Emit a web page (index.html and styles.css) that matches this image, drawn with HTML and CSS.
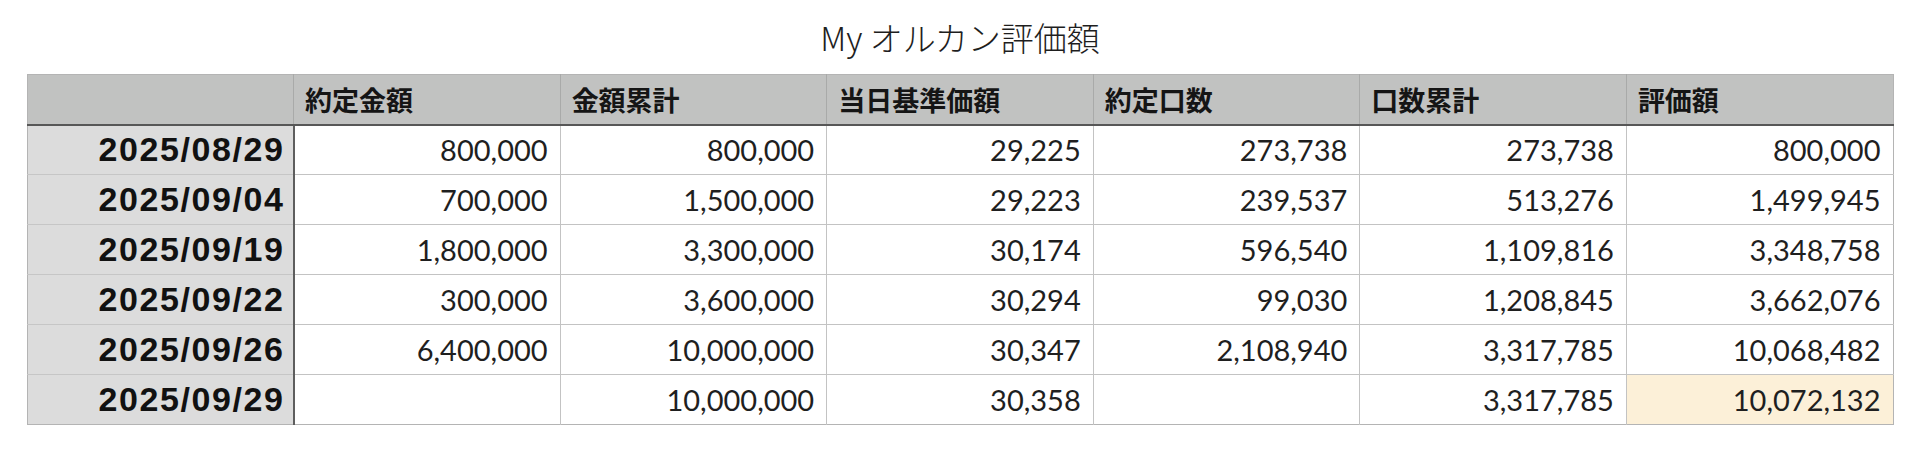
FILE: index.html
```html
<!DOCTYPE html>
<html lang="ja">
<head>
<meta charset="utf-8">
<title>My オルカン評価額</title>
<link rel="stylesheet" href="styles.css">
</head>
<body>
<div class="page">
  <h1 class="title">My オルカン評価額</h1>
  <table class="sheet">
    <thead>
      <tr>
        <th class="corner"></th>
        <th>約定金額</th>
        <th>金額累計</th>
        <th>当日基準価額</th>
        <th>約定口数</th>
        <th>口数累計</th>
        <th>評価額</th>
      </tr>
    </thead>
    <tbody>
      <tr>
        <th class="date">2025/08/29</th>
        <td>800,000</td><td>800,000</td><td>29,225</td><td>273,738</td><td>273,738</td><td>800,000</td>
      </tr>
      <tr>
        <th class="date">2025/09/04</th>
        <td>700,000</td><td>1,500,000</td><td>29,223</td><td>239,537</td><td>513,276</td><td>1,499,945</td>
      </tr>
      <tr>
        <th class="date">2025/09/19</th>
        <td>1,800,000</td><td>3,300,000</td><td>30,174</td><td>596,540</td><td>1,109,816</td><td>3,348,758</td>
      </tr>
      <tr>
        <th class="date">2025/09/22</th>
        <td>300,000</td><td>3,600,000</td><td>30,294</td><td>99,030</td><td>1,208,845</td><td>3,662,076</td>
      </tr>
      <tr>
        <th class="date">2025/09/26</th>
        <td>6,400,000</td><td>10,000,000</td><td>30,347</td><td>2,108,940</td><td>3,317,785</td><td>10,068,482</td>
      </tr>
      <tr>
        <th class="date">2025/09/29</th>
        <td></td><td>10,000,000</td><td>30,358</td><td></td><td>3,317,785</td><td class="highlight">10,072,132</td>
      </tr>
    </tbody>
  </table>
</div>
</body>
</html>
```
FILE: styles.css
```css
html, body {
  margin: 0;
  padding: 0;
  background: #ffffff;
}

.page {
  width: 1867px;
  margin: 0 auto;
  padding-top: 17px;
}

.title {
  margin: 0;
  height: 57px;
  line-height: 40px;
  text-align: center;
  font-family: "Noto Sans CJK JP", "Noto Sans", sans-serif;
  font-weight: 300;
  font-size: 33px;
  color: #1e1e1e;
}

.sheet {
  width: 1867px;
  table-layout: fixed;
  border-collapse: collapse;
  border: 1px solid #b4b4b4;
}

.sheet thead tr {
  height: 50px;
  background: #c1c2c1;
}

.sheet thead th {
  text-align: left;
  padding: 0 10px 0 11px;
  font-family: "Noto Sans CJK JP", sans-serif;
  font-weight: 700;
  font-size: 27px;
  color: #151515;
  border-left: 1px solid #a9aaa9;
  border-bottom: 2px solid #575757;
}

.sheet thead th.corner {
  border-left: none;
}

.sheet tbody tr {
  height: 50px;
}

.sheet td {
  text-align: right;
  padding: 0 12px 0 10px;
  font-family: Lato, "Open Sans", "Noto Sans CJK JP", sans-serif;
  font-weight: 400;
  font-size: 29px;
  color: #1f1f1f;
  border-top: 1px solid #c3c3c3;
  border-left: 1px solid #c3c3c3;
  background: #ffffff;
}

.sheet th.date {
  text-align: right;
  padding: 0 8px 0 10px;
  font-family: "Liberation Sans", Arial, sans-serif;
  font-weight: 700;
  font-size: 34px;
  letter-spacing: 1.6px;
  color: #111111;
  background: #dcdcdc;
  border-top: 1px solid #c6c6c6;
  border-right: 2px solid #5e5e5e;
}

.sheet td.highlight {
  background: #fcf0d8;
}
```
